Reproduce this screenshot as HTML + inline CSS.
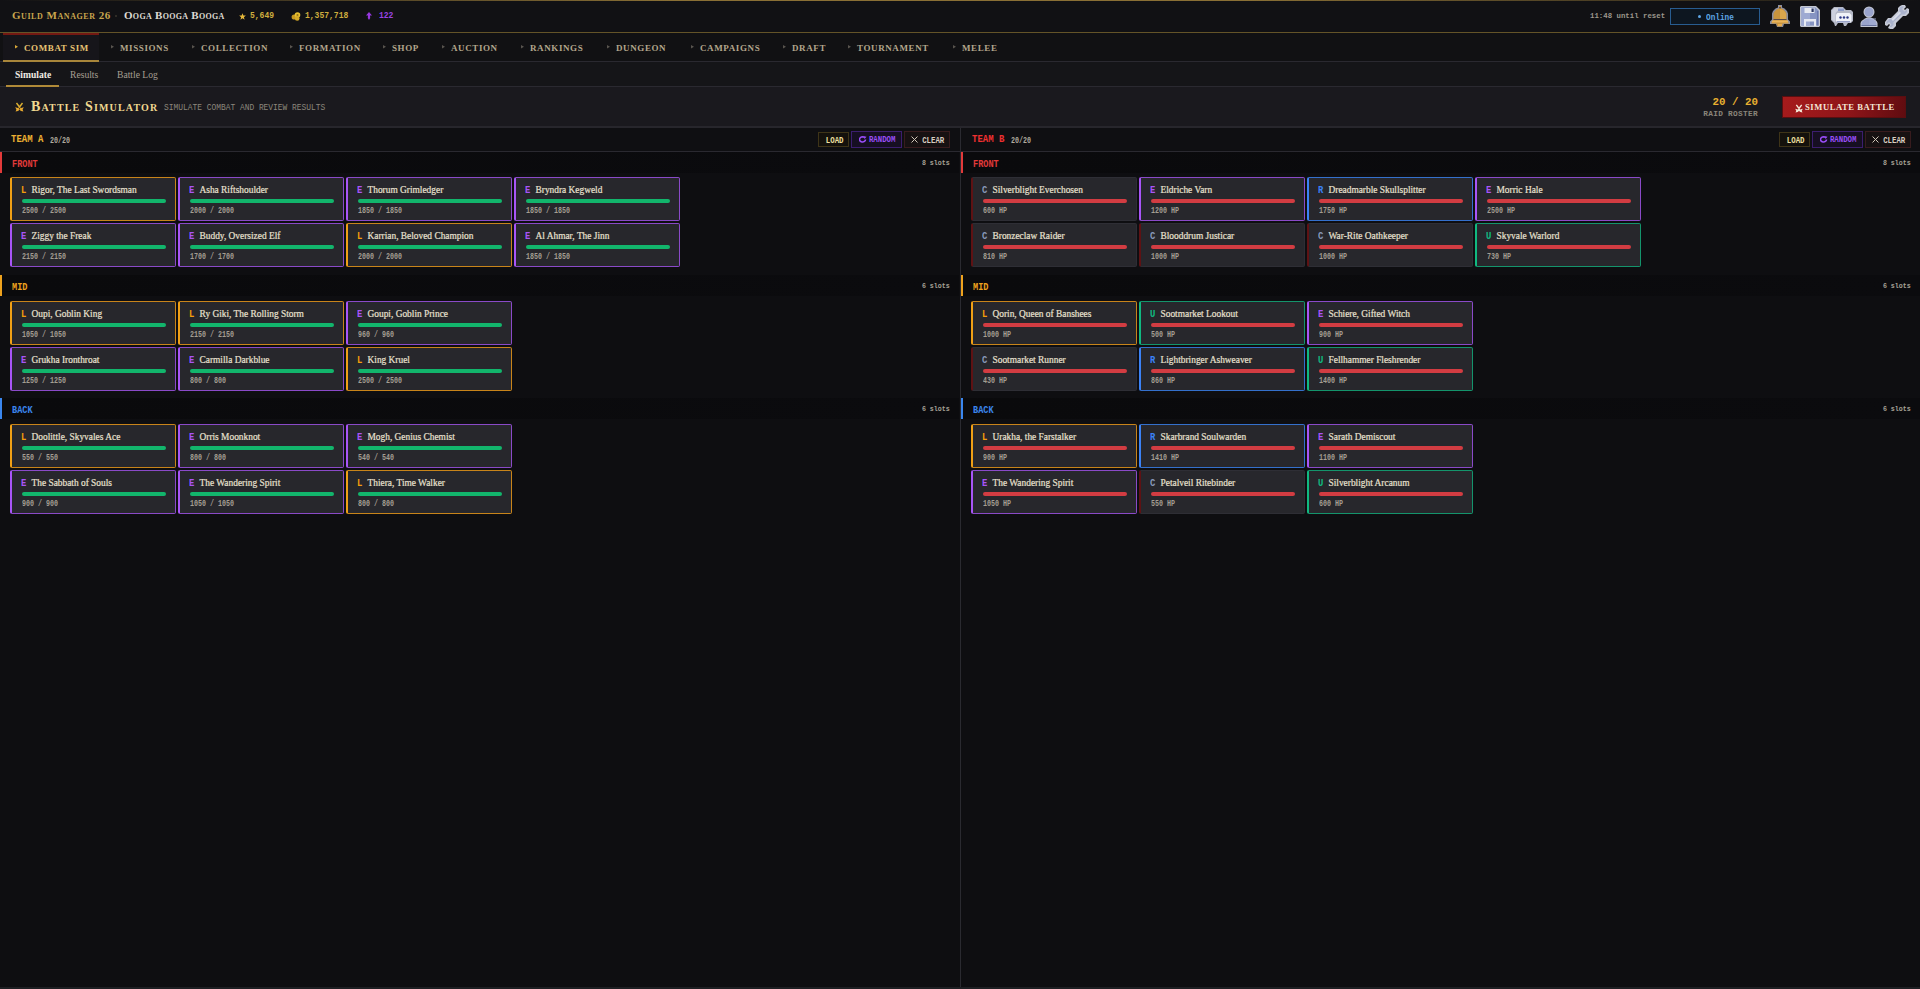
<!DOCTYPE html>
<html><head><meta charset="utf-8"><title>Guild Manager 26 - Battle Simulator</title>
<style>
*{margin:0;padding:0;box-sizing:border-box}
html,body{width:1920px;height:989px;overflow:hidden;background:#0e0e11;color:#ddd;font-family:"Liberation Serif",serif}
.abs{position:absolute}
.mono{font-family:"Liberation Mono",monospace}
.serif{font-family:"Liberation Serif",serif}
/* top bar */
.topbar{position:absolute;left:0;top:0;width:1920px;height:33px;background:#111114;border-bottom:1px solid #645428}
.topline{position:absolute;left:0;top:0;width:1920px;height:1px;background:linear-gradient(90deg,rgba(160,130,60,0) 0%,#8a7035 35%,#8a7035 65%,rgba(160,130,60,0) 100%)}
.brand{position:absolute;left:12px;top:8px;font-weight:bold;font-variant:small-caps;font-size:11px;letter-spacing:0.55px;color:#c9a64e;white-space:nowrap;line-height:14px}
.sep{position:absolute;left:115px;top:15px;width:2px;height:2px;background:#3a362c;border-radius:1px}
.player{position:absolute;left:124px;top:8px;font-weight:bold;font-variant:small-caps;font-size:11px;letter-spacing:0.3px;color:#dedad2;white-space:nowrap;line-height:14px}
.stat{position:absolute;top:10px;font-family:"Liberation Mono",monospace;font-weight:bold;font-size:9px;line-height:12px;white-space:nowrap;transform:scaleX(0.89);transform-origin:0 0}
.reset{position:absolute;left:1590px;top:11px;font-family:"Liberation Mono",monospace;font-weight:bold;font-size:8px;transform:scaleX(0.92);transform-origin:0 0;color:#9c978c;line-height:10px;white-space:nowrap}
.online{position:absolute;left:1670px;top:8px;width:90px;height:17px;border:1px solid #285c90;background:#0d1620;color:#5ea6e6;font-family:"Liberation Mono",monospace;font-weight:bold;font-size:8.6px;line-height:15px;text-align:center;white-space:nowrap}
/* nav */
.nav{position:absolute;left:0;top:33px;width:1920px;height:29px;background:#111113;border-bottom:1px solid #2a2930}
.navact{position:absolute;left:3px;top:0;width:96px;height:29px;background:#16151a;border-top:2px solid #741812;border-bottom:2px solid #a8863a}
.navitem{position:absolute;top:10px;font-weight:bold;font-size:9px;letter-spacing:0.6px;color:#b3a68c;white-space:nowrap;line-height:11px}
.navitem.act{color:#e6c272}
.bul{position:absolute;top:12px;width:3px;height:3.5px;clip-path:polygon(0 0,100% 50%,0 100%);background:#58544e}
.bul.act{background:#d8a838}
/* subtabs */
.subtabs{position:absolute;left:0;top:62px;width:1920px;height:25px;background:#151518;border-bottom:1px solid #2a2930}
.subtab{position:absolute;top:7px;font-size:9.6px;color:#a69f92;white-space:nowrap;line-height:12px}
.subtab.act{color:#f0ece4;font-weight:bold}
.subul{position:absolute;left:6px;top:23px;width:53px;height:2px;background:#b08a38}
/* sim header */
.simhead{position:absolute;left:0;top:87px;width:1920px;height:41px;background:#1a191e;border-bottom:2px solid #27262c}
.simtitle{position:absolute;left:31px;top:12px;font-weight:bold;font-variant:small-caps;font-size:14px;letter-spacing:1.15px;color:#f0d890;white-space:nowrap;line-height:16px}
.simsub{position:absolute;left:164px;top:16px;font-family:"Liberation Mono",monospace;font-size:8.5px;letter-spacing:0px;transform:scaleX(0.93);transform-origin:0 0;color:#8c877c;white-space:nowrap;line-height:10px}
.roster{position:absolute;left:1700px;top:9px;width:58px;text-align:right;font-family:"Liberation Mono",monospace;white-space:nowrap}
.roster .n{display:block;font-size:11.4px;font-weight:bold;color:#e8b030;line-height:13px;transform:scaleX(0.95);transform-origin:100% 0}
.roster .l{display:block;font-size:7.8px;font-weight:bold;letter-spacing:0.3px;color:#8a857a;line-height:10px;margin-top:0px}
.simbtn{position:absolute;left:1782px;top:9px;width:124px;height:22px;background:linear-gradient(100deg,#a61b1c 0%,#8e1519 55%,#600c10 100%);border:1px solid #5a0e10;color:#f4e8d8;font-weight:bold;font-size:8.6px;line-height:21px;white-space:nowrap;letter-spacing:0.55px}
/* teams */
.divider{position:absolute;left:960px;top:128px;width:1px;height:861px;background:#2a2a30}
.teamhead{position:absolute;top:128px;height:24px;background:#0f0f12;border-bottom:1px solid #2a2930}
.teamname{position:absolute;top:7px;font-family:"Liberation Mono",monospace;font-weight:bold;font-size:10.2px;letter-spacing:0px;transform:scaleX(0.88);transform-origin:0 0;line-height:11px;white-space:nowrap}
.teamcount{position:absolute;top:9px;font-family:"Liberation Mono",monospace;font-weight:bold;font-size:8.6px;transform:scaleX(0.78);transform-origin:0 0;color:#b0aa9e;line-height:10px;white-space:nowrap}
.btn{position:absolute;font-family:"Liberation Mono",monospace;font-weight:bold;font-size:7px;line-height:14px;text-align:center;white-space:nowrap}
.sec{position:absolute;width:959px;height:21px;background:linear-gradient(90deg,#0a0a0c,#0b0b0e)}
.sec::before{content:"";position:absolute;left:0;top:0;width:2px;height:21px}
.sec-front::before{background:#e23a3a}
.sec-mid::before{background:#eea21e}
.sec-back::before{background:#3a86ee}
.secname{position:absolute;left:12px;top:7px;font-family:"Liberation Mono",monospace;font-weight:bold;font-size:10.6px;letter-spacing:0px;line-height:10px;transform:scaleX(0.81);transform-origin:0 0}
.sec-front .secname{color:#e23a3a}
.sec-mid .secname{color:#eea21e}
.sec-back .secname{color:#3a86ee}
.slots{position:absolute;right:9px;top:6px;font-family:"Liberation Mono",monospace;font-weight:bold;font-size:7.8px;letter-spacing:0px;color:#a8a296;line-height:11px;transform:scaleX(0.85);transform-origin:100% 0}
.card{position:absolute;width:166px;height:44px;background:#27272c;border:1px solid #33333a;border-left-width:2px;border-radius:2px}
.card .rl{position:absolute;left:9px;top:6px;font-family:"Liberation Mono",monospace;font-weight:bold;font-size:10.8px;line-height:12px;transform:scaleX(0.82);transform-origin:0 0}
.card .nm{position:absolute;left:19.5px;top:6px;font-size:9.4px;color:#e8e0d0;line-height:12px;white-space:nowrap;-webkit-text-stroke:0.2px #e8e0d0}
.card .bar{position:absolute;left:10px;top:21px;width:144px;height:4px;border-radius:2px;background:#12b56c}
.card.tb .bar{background:#d23c42}
.card .hp{position:absolute;left:10px;top:28px;font-family:"Liberation Mono",monospace;font-weight:bold;font-size:8.5px;transform:scaleX(0.785);transform-origin:0 0;color:#a39d92;line-height:10px;white-space:nowrap}
.rL{border-color:#c8841a;border-left-color:#f0a016}
.rL .rl{color:#f59e0b}
.rE{border-color:#8a4ac8;border-left-color:#a855f7}
.rE .rl{color:#a855f7}
.rR{border-color:#3470cc;border-left-color:#3b82f6}
.rR .rl{color:#3b82f6}
.rU{border-color:#14946c;border-left-color:#10b981}
.rU .rl{color:#10b981}
.rC{border-color:#2e2e35;border-left-color:#5e1214}
.rC .rl{color:#8a9abc}
.bottom{position:absolute;left:0;top:987px;width:1920px;height:2px;background:#1e1f23}
.bt{display:inline-block;font-size:9px;transform:scaleX(0.82);transform-origin:50% 0}

</style></head>
<body>
<div class="topbar">
  <div class="topline"></div>
  <div class="brand">Guild Manager 26</div>
  <div class="sep"></div>
  <div class="player">Ooga Booga Booga</div>
  <svg class="abs" style="left:238.5px;top:12.5px" width="7" height="7" viewBox="0 0 10 10"><path d="M5 0.3 L6.3 3.6 L9.8 3.7 L7 5.9 L8 9.5 L5 7.4 L2 9.5 L3 5.9 L0.2 3.7 L3.7 3.6 Z" fill="#e6b83a"/></svg>
  <div class="stat" style="left:250px;color:#cfae3e">5,649</div>
  <svg class="abs" style="left:291px;top:11px" width="10" height="10" viewBox="0 0 10 10"><circle cx="3.2" cy="6" r="2.6" fill="#c89a20"/><circle cx="6.5" cy="4" r="2.8" fill="#e8c030"/><circle cx="6.2" cy="7.4" r="2.3" fill="#d6aa28"/><circle cx="6.5" cy="4" r="1.1" fill="#9a7418"/></svg>
  <div class="stat" style="left:305px;color:#cfae3e">1,357,718</div>
  <svg class="abs" style="left:366px;top:12px" width="6" height="8" viewBox="0 0 6 8"><path d="M3 0 L6 3.5 L4 3.5 L4.2 6 L3 8 L1.8 6 L2 3.5 L0 3.5 Z" fill="#9838e0"/></svg>
  <div class="stat" style="left:379px;color:#9844e4">122</div>
  <div class="reset">11:48 until reset</div>
  <div class="online"><span class="abs" style="left:27px;top:6px;width:3px;height:3px;border-radius:2px;background:#5ea6e6"></span><span class="abs" style="left:35px;top:2px;transform:scaleX(0.9);transform-origin:0 0">Online</span></div>
  <!-- bell -->
  <svg class="abs" style="left:1770px;top:5px" width="20" height="22" viewBox="0 0 20 22">
    <path d="M8 0h4v2.5l2.5 1 2.5 2.5 1 2.5v6l2 2v2.5h-6l-1 3h-6l-1-3H0v-2.5l2-2v-6l1-2.5 2.5-2.5 2.5-1z" fill="#8a8ea2"/>
    <path d="M9 1h2v2.3l2.2 1 2.3 2.2 1 2.3v6.2l2 2v1.5h-5.8l-1 3h-4.4l-1-3H1.5v-1.5l2-2V8.8l1-2.3 2.3-2.2 2.2-1z" fill="#c8943e"/>
    <path d="M10 4l3 1 2 2 1 2v6h-6z" fill="#dba64c"/>
    <rect x="9.3" y="2" width="1.4" height="1.4" fill="#3a3040"/>
    <rect x="3.5" y="14" width="13" height="1" fill="#5a4a48"/>
    <rect x="2" y="15.5" width="16" height="2" fill="#eab45a"/>
    <rect x="8" y="19" width="4" height="2" fill="#e6ac50"/>
  </svg>
  <!-- floppy -->
  <svg class="abs" style="left:1800px;top:6px" width="20" height="21" viewBox="0 0 20 21">
    <path d="M1 0h15l4 4v16l-1 1H1l-1-1V1z" fill="#c2c6d0"/>
    <path d="M1.5 1.5h14l3 3V19.5h-17z" fill="#8694c2"/>
    <rect x="1.5" y="1.5" width="8.5" height="18" fill="#9eaad2"/>
    <rect x="4.5" y="2" width="10" height="5" fill="#e8ebf2"/><rect x="11.5" y="2.5" width="2.2" height="3.5" fill="#2c3866"/>
    <rect x="17" y="5" width="1.5" height="14.5" fill="#6a78b0"/>
    <path d="M4 13h12v7h-2v-4.5H6V20H4z" fill="#e6e9f2"/>
  </svg>
  <!-- chat -->
  <svg class="abs" style="left:1831px;top:7px" width="22" height="20" viewBox="0 0 22 20">
    <path d="M3 0h9l3 3h5l2 2v9l-2 2h-3l-2 3h-2l-1-3H7l-2 3H4l-1-3-3-3V3z" fill="#b4b8c6"/>
    <path d="M3.5 1h8l2 2v1H6.5l-2 2v8l-1 1-2.5-2.5V3.5z" fill="#cdd1de"/>
    <rect x="7" y="1.5" width="6" height="2.5" fill="#8c9cc8"/>
    <path d="M6.5 6h12l2 2v6l-1.5 1.5H6.5L5 14V7.5z" fill="#f0f2f8"/>
    <rect x="6" y="14" width="13" height="1.5" fill="#9aa4c8"/>
    <circle cx="9.5" cy="10.5" r="1.2" fill="#2e3a86"/><circle cx="13" cy="10.5" r="1.2" fill="#2e3a86"/><circle cx="16.5" cy="10.5" r="1.2" fill="#2e3a86"/>
  </svg>
  <!-- person -->
  <svg class="abs" style="left:1860px;top:6px" width="18" height="21" viewBox="0 0 18 21">
    <path d="M5 12.5 Q9 10 13 12.5 L16.5 15 L17.5 17 V21 H0.5 V17 L1.5 15 Z" fill="#c4c8d4"/>
    <circle cx="9" cy="6" r="5.5" fill="#c4c8d4"/>
    <circle cx="9" cy="6" r="4.5" fill="#9aa4cc"/>
    <path d="M5.5 13.3 Q9 11.2 12.5 13.3 L15.8 15.6 L16.5 17.2 V20 H1.5 V17.2 L2.2 15.6 Z" fill="#9aa4cc"/>
    <rect x="9" y="12" width="7" height="8" fill="#a8b2d6" opacity="0.45"/>
    <rect x="1.5" y="19" width="15" height="1" fill="#6a74a0"/>
  </svg>
  <!-- wrench -->
  <svg class="abs" style="left:1885px;top:5px" width="24" height="24" viewBox="0 0 24 24">
    <path d="M15 1l2-1h3l1 2-2 2 1 1 2-2 2 1v4l-3 3h-3l-7 7v3l-3 3H5l-2-1 1-2 1-1-1-1-2 2-2-1v-3l3-4h3l7-7V3z" fill="#c6cad6"/>
    <path d="M16 1.5h3l-2 2.5 2.5 2.5 2.5-2v2.5l-2.5 2.5h-3L8.5 17v3l-2 2H4.5l2-2.5L4 17l-2.5 2v-2l2.5-3h3L14.5 6.5V3z" fill="#aab2cc"/>
    <path d="M14.5 6.5L16 8 8 16 6.5 14.5z" fill="#d8dce8"/>
  </svg>
</div>

<div class="nav">
  <div class="navact"></div>
  <div class="bul act" style="left:15px"></div><div class="navitem act" style="left:24px">COMBAT SIM</div>
  <div class="bul" style="left:111px"></div><div class="navitem" style="left:120px">MISSIONS</div>
  <div class="bul" style="left:192px"></div><div class="navitem" style="left:201px">COLLECTION</div>
  <div class="bul" style="left:290px"></div><div class="navitem" style="left:299px">FORMATION</div>
  <div class="bul" style="left:383px"></div><div class="navitem" style="left:392px">SHOP</div>
  <div class="bul" style="left:442px"></div><div class="navitem" style="left:451px">AUCTION</div>
  <div class="bul" style="left:521px"></div><div class="navitem" style="left:530px">RANKINGS</div>
  <div class="bul" style="left:607px"></div><div class="navitem" style="left:616px">DUNGEON</div>
  <div class="bul" style="left:691px"></div><div class="navitem" style="left:700px">CAMPAIGNS</div>
  <div class="bul" style="left:783px"></div><div class="navitem" style="left:792px">DRAFT</div>
  <div class="bul" style="left:848px"></div><div class="navitem" style="left:857px">TOURNAMENT</div>
  <div class="bul" style="left:953px"></div><div class="navitem" style="left:962px">MELEE</div>
</div>

<div class="subtabs">
  <div class="subtab act" style="left:15px">Simulate</div>
  <div class="subtab" style="left:70px">Results</div>
  <div class="subtab" style="left:117px">Battle Log</div>
  <div class="subul"></div>
</div>

<div class="simhead">
  <svg class="abs" style="left:15px;top:15px" width="9" height="10" viewBox="0 0 9 10">
    <path d="M1.5 1 L4.5 5 M7.5 1 L4.5 5" stroke="#dcb030" stroke-width="1.4"/>
    <path d="M0.2 5.2 L3 6 L4.5 5 L6 6 L8.8 5.2 L7.6 7.4 L8.4 9.4 L6 9 L4.5 7.8 L3 9 L0.6 9.4 L1.4 7.4 Z" fill="#e6a830"/>
    <circle cx="4.5" cy="6.8" r="0.7" fill="#3a2a10"/>
  </svg>
  <div class="simtitle">Battle Simulator</div>
  <div class="simsub">SIMULATE COMBAT AND REVIEW RESULTS</div>
  <div class="roster"><span class="n">20 / 20</span><span class="l">RAID ROSTER</span></div>
  <div class="simbtn">
    <svg class="abs" style="left:12px;top:7px" width="8" height="9" viewBox="0 0 9 10">
      <path d="M1.5 1 L4.5 5 M7.5 1 L4.5 5" stroke="#f4e8d8" stroke-width="1.5"/>
      <path d="M0.2 5.2 L3 6 L4.5 5 L6 6 L8.8 5.2 L7.6 7.4 L8.4 9.4 L6 9 L4.5 7.8 L3 9 L0.6 9.4 L1.4 7.4 Z" fill="#f4e8d8"/>
    </svg>
    <span class="abs" style="left:22px;top:0">SIMULATE BATTLE</span>
  </div>
</div>

<div class="divider"></div>
<div class="teamhead" style="left:0;width:960px"></div>
<div class="teamhead" style="left:961px;width:959px"></div>
<div class="teamname" style="left:11px;top:134px;color:#ecb032">TEAM A</div>
<div class="teamcount" style="left:50px;top:136px">20/20</div>
<div class="teamname" style="left:972px;top:134px;color:#ee3030">TEAM B</div>
<div class="teamcount" style="left:1011px;top:136px">20/20</div>

<div class="btn" style="left:818px;top:132px;width:31px;height:15px;border:1px solid #3e3418;background:#14110c;color:#f0e0a0;line-height:13px"><span class="bt" style="position:absolute;left:5px;top:2px;width:20px">LOAD</span></div>
<div class="btn" style="left:851px;top:131px;width:51px;height:17px;border:1px solid #3c1e6e;background:#160f22;color:#9a4ef8;line-height:15px"><svg class="abs" style="left:7px;top:4px" width="8" height="7" viewBox="0 0 8 7"><path d="M6.5 3.5 A3 2.6 0 1 1 5 1.2" stroke="#9a4ef8" stroke-width="1.6" fill="none"/><path d="M4.2 0 L7.5 0.8 L5.6 3 Z" fill="#9a4ef8"/></svg><span class="bt" style="position:absolute;left:14px;top:1px;width:32px">RANDOM</span></div>
<div class="btn" style="left:904px;top:131px;width:46px;height:17px;border:1px solid #381c1e;background:#171112;color:#d8cec0;line-height:15px"><svg class="abs" style="left:6px;top:4px" width="7" height="7" viewBox="0 0 7 7"><path d="M0.5 0.5L6.5 6.5M6.5 0.5L0.5 6.5" stroke="#cfc6b8" stroke-width="1"/></svg><span class="bt" style="position:absolute;left:15px;top:2px;width:24px">CLEAR</span></div>

<div class="btn" style="left:1779px;top:132px;width:31px;height:15px;border:1px solid #3e3418;background:#14110c;color:#f0e0a0;line-height:13px"><span class="bt" style="position:absolute;left:5px;top:2px;width:20px">LOAD</span></div>
<div class="btn" style="left:1812px;top:131px;width:51px;height:17px;border:1px solid #3c1e6e;background:#160f22;color:#9a4ef8;line-height:15px"><svg class="abs" style="left:7px;top:4px" width="8" height="7" viewBox="0 0 8 7"><path d="M6.5 3.5 A3 2.6 0 1 1 5 1.2" stroke="#9a4ef8" stroke-width="1.6" fill="none"/><path d="M4.2 0 L7.5 0.8 L5.6 3 Z" fill="#9a4ef8"/></svg><span class="bt" style="position:absolute;left:14px;top:1px;width:32px">RANDOM</span></div>
<div class="btn" style="left:1865px;top:131px;width:46px;height:17px;border:1px solid #381c1e;background:#171112;color:#d8cec0;line-height:15px"><svg class="abs" style="left:6px;top:4px" width="7" height="7" viewBox="0 0 7 7"><path d="M0.5 0.5L6.5 6.5M6.5 0.5L0.5 6.5" stroke="#cfc6b8" stroke-width="1"/></svg><span class="bt" style="position:absolute;left:15px;top:2px;width:24px">CLEAR</span></div>

<div class="sec sec-front" style="left:0px;top:152px"><span class="secname">FRONT</span><span class="slots">8 slots</span></div>
<div class="card rL ta" style="left:10px;top:177.0px"><span class="rl">L</span><span class="nm">Rigor, The Last Swordsman</span><div class="bar"></div><span class="hp">2500 / 2500</span></div>
<div class="card rE ta" style="left:178px;top:177.0px"><span class="rl">E</span><span class="nm">Asha Riftshoulder</span><div class="bar"></div><span class="hp">2000 / 2000</span></div>
<div class="card rE ta" style="left:346px;top:177.0px"><span class="rl">E</span><span class="nm">Thorum Grimledger</span><div class="bar"></div><span class="hp">1850 / 1850</span></div>
<div class="card rE ta" style="left:514px;top:177.0px"><span class="rl">E</span><span class="nm">Bryndra Kegweld</span><div class="bar"></div><span class="hp">1850 / 1850</span></div>
<div class="card rE ta" style="left:10px;top:223.4px"><span class="rl">E</span><span class="nm">Ziggy the Freak</span><div class="bar"></div><span class="hp">2150 / 2150</span></div>
<div class="card rE ta" style="left:178px;top:223.4px"><span class="rl">E</span><span class="nm">Buddy, Oversized Elf</span><div class="bar"></div><span class="hp">1700 / 1700</span></div>
<div class="card rL ta" style="left:346px;top:223.4px"><span class="rl">L</span><span class="nm">Karrian, Beloved Champion</span><div class="bar"></div><span class="hp">2000 / 2000</span></div>
<div class="card rE ta" style="left:514px;top:223.4px"><span class="rl">E</span><span class="nm">Al Ahmar, The Jinn</span><div class="bar"></div><span class="hp">1850 / 1850</span></div>
<div class="sec sec-mid" style="left:0px;top:275px"><span class="secname">MID</span><span class="slots">6 slots</span></div>
<div class="card rL ta" style="left:10px;top:301.0px"><span class="rl">L</span><span class="nm">Oupi, Goblin King</span><div class="bar"></div><span class="hp">1050 / 1050</span></div>
<div class="card rL ta" style="left:178px;top:301.0px"><span class="rl">L</span><span class="nm">Ry Giki, The Rolling Storm</span><div class="bar"></div><span class="hp">2150 / 2150</span></div>
<div class="card rE ta" style="left:346px;top:301.0px"><span class="rl">E</span><span class="nm">Goupi, Goblin Prince</span><div class="bar"></div><span class="hp">960 / 960</span></div>
<div class="card rE ta" style="left:10px;top:347.4px"><span class="rl">E</span><span class="nm">Grukha Ironthroat</span><div class="bar"></div><span class="hp">1250 / 1250</span></div>
<div class="card rE ta" style="left:178px;top:347.4px"><span class="rl">E</span><span class="nm">Carmilla Darkblue</span><div class="bar"></div><span class="hp">800 / 800</span></div>
<div class="card rL ta" style="left:346px;top:347.4px"><span class="rl">L</span><span class="nm">King Kruel</span><div class="bar"></div><span class="hp">2500 / 2500</span></div>
<div class="sec sec-back" style="left:0px;top:398px"><span class="secname">BACK</span><span class="slots">6 slots</span></div>
<div class="card rL ta" style="left:10px;top:424.0px"><span class="rl">L</span><span class="nm">Doolittle, Skyvales Ace</span><div class="bar"></div><span class="hp">550 / 550</span></div>
<div class="card rE ta" style="left:178px;top:424.0px"><span class="rl">E</span><span class="nm">Orris Moonknot</span><div class="bar"></div><span class="hp">800 / 800</span></div>
<div class="card rE ta" style="left:346px;top:424.0px"><span class="rl">E</span><span class="nm">Mogh, Genius Chemist</span><div class="bar"></div><span class="hp">540 / 540</span></div>
<div class="card rE ta" style="left:10px;top:470.4px"><span class="rl">E</span><span class="nm">The Sabbath of Souls</span><div class="bar"></div><span class="hp">900 / 900</span></div>
<div class="card rE ta" style="left:178px;top:470.4px"><span class="rl">E</span><span class="nm">The Wandering Spirit</span><div class="bar"></div><span class="hp">1050 / 1050</span></div>
<div class="card rL ta" style="left:346px;top:470.4px"><span class="rl">L</span><span class="nm">Thiera, Time Walker</span><div class="bar"></div><span class="hp">800 / 800</span></div>
<div class="sec sec-front" style="left:961px;top:152px"><span class="secname">FRONT</span><span class="slots">8 slots</span></div>
<div class="card rC tb" style="left:971px;top:177.0px"><span class="rl">C</span><span class="nm">Silverblight Everchosen</span><div class="bar"></div><span class="hp">600 HP</span></div>
<div class="card rE tb" style="left:1139px;top:177.0px"><span class="rl">E</span><span class="nm">Eldriche Varn</span><div class="bar"></div><span class="hp">1200 HP</span></div>
<div class="card rR tb" style="left:1307px;top:177.0px"><span class="rl">R</span><span class="nm">Dreadmarble Skullsplitter</span><div class="bar"></div><span class="hp">1750 HP</span></div>
<div class="card rE tb" style="left:1475px;top:177.0px"><span class="rl">E</span><span class="nm">Morric Hale</span><div class="bar"></div><span class="hp">2500 HP</span></div>
<div class="card rC tb" style="left:971px;top:223.4px"><span class="rl">C</span><span class="nm">Bronzeclaw Raider</span><div class="bar"></div><span class="hp">810 HP</span></div>
<div class="card rC tb" style="left:1139px;top:223.4px"><span class="rl">C</span><span class="nm">Blooddrum Justicar</span><div class="bar"></div><span class="hp">1000 HP</span></div>
<div class="card rC tb" style="left:1307px;top:223.4px"><span class="rl">C</span><span class="nm">War-Rite Oathkeeper</span><div class="bar"></div><span class="hp">1000 HP</span></div>
<div class="card rU tb" style="left:1475px;top:223.4px"><span class="rl">U</span><span class="nm">Skyvale Warlord</span><div class="bar"></div><span class="hp">730 HP</span></div>
<div class="sec sec-mid" style="left:961px;top:275px"><span class="secname">MID</span><span class="slots">6 slots</span></div>
<div class="card rL tb" style="left:971px;top:301.0px"><span class="rl">L</span><span class="nm">Qorin, Queen of Banshees</span><div class="bar"></div><span class="hp">1000 HP</span></div>
<div class="card rU tb" style="left:1139px;top:301.0px"><span class="rl">U</span><span class="nm">Sootmarket Lookout</span><div class="bar"></div><span class="hp">500 HP</span></div>
<div class="card rE tb" style="left:1307px;top:301.0px"><span class="rl">E</span><span class="nm">Schiere, Gifted Witch</span><div class="bar"></div><span class="hp">900 HP</span></div>
<div class="card rC tb" style="left:971px;top:347.4px"><span class="rl">C</span><span class="nm">Sootmarket Runner</span><div class="bar"></div><span class="hp">430 HP</span></div>
<div class="card rR tb" style="left:1139px;top:347.4px"><span class="rl">R</span><span class="nm">Lightbringer Ashweaver</span><div class="bar"></div><span class="hp">860 HP</span></div>
<div class="card rU tb" style="left:1307px;top:347.4px"><span class="rl">U</span><span class="nm">Fellhammer Fleshrender</span><div class="bar"></div><span class="hp">1400 HP</span></div>
<div class="sec sec-back" style="left:961px;top:398px"><span class="secname">BACK</span><span class="slots">6 slots</span></div>
<div class="card rL tb" style="left:971px;top:424.0px"><span class="rl">L</span><span class="nm">Urakha, the Farstalker</span><div class="bar"></div><span class="hp">900 HP</span></div>
<div class="card rR tb" style="left:1139px;top:424.0px"><span class="rl">R</span><span class="nm">Skarbrand Soulwarden</span><div class="bar"></div><span class="hp">1410 HP</span></div>
<div class="card rE tb" style="left:1307px;top:424.0px"><span class="rl">E</span><span class="nm">Sarath Demiscout</span><div class="bar"></div><span class="hp">1100 HP</span></div>
<div class="card rE tb" style="left:971px;top:470.4px"><span class="rl">E</span><span class="nm">The Wandering Spirit</span><div class="bar"></div><span class="hp">1050 HP</span></div>
<div class="card rC tb" style="left:1139px;top:470.4px"><span class="rl">C</span><span class="nm">Petalveil Ritebinder</span><div class="bar"></div><span class="hp">550 HP</span></div>
<div class="card rU tb" style="left:1307px;top:470.4px"><span class="rl">U</span><span class="nm">Silverblight Arcanum</span><div class="bar"></div><span class="hp">600 HP</span></div>
<div class="bottom"></div>

</body></html>
